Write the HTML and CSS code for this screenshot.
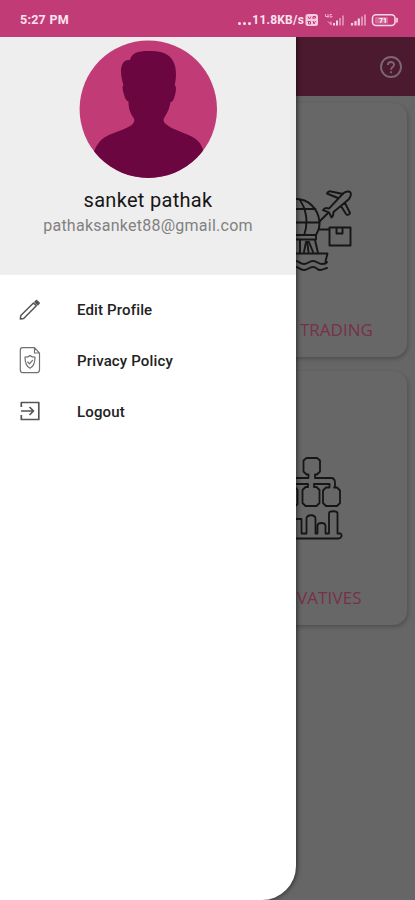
FILE: index.html
```html
<!DOCTYPE html>
<html lang="en">
<head>
<meta charset="utf-8">
<meta name="viewport" content="width=device-width, initial-scale=1">
<title>Profile menu</title>
<link rel="stylesheet" href="styles.css">
</head>
<body>
<div class="screen">
  <header class="status">
    <span class="time">5:27 PM</span>
    <div class="indicators">
      <span class="dots"><i></i><i></i><i></i></span>
      <span class="speed">11.8KB/s</span>
      <svg class="tray" width="95" height="16" viewBox="304 11 95 16">
        <rect x="305.500" y="13" width="12.500" height="12" rx="2.500" fill="#f7c9df"/>
        <path d="M308 15.500l1.500 2.500 1.500-2.500M313 18v-2.500h2.500V17H313M307.500 20.500h3v2.500h-2v-2M313 20l1 3 1.500-3" fill="none" stroke="#c13c77"/>
        <path d="M325.500 13v2.500h3M328 13v4M330 13.500h2M330 13.500v2.500h2V15" fill="none" stroke="#f3b9d3" stroke-width=".9"/>
        <path d="M328 20.500l3 3M331 20.500V24" stroke="#f3b9d3" fill="none"/>
        <path d="M334 22v2.500M337 19.500v5" stroke="#f7d0e2" stroke-width="2"/>
        <path d="M340 17v7.500M343 14.500v10" stroke="#dc86ae" stroke-width="2"/>
        <path d="M352 22v2.500M355.500 20v4.500M358.800 17.500v7" stroke="#f7d0e2" stroke-width="2.200"/>
        <path d="M362 15.500v9M365 13.500v11" stroke="#e090b5" stroke-width="2"/>
        <rect x="372.500" y="13.800" width="22.500" height="10.700" rx="3.500" fill="none" stroke="#f9d5e5" stroke-width="1.600"/>
        <path d="M397 17.500v3.500" stroke="#f9d5e5" stroke-width="1.600" stroke-linecap="round"/>
        <rect x="375" y="16" width="13" height="6.500" rx="1" fill="#d56d9b"/>
        <text x="379" y="22.300" class="battery">71</text>
      </svg>
    </div>
  </header>

  <div class="stage">
    <div class="appbar">
      <svg width="24" height="24" viewBox="0 0 24 24" fill="none" stroke="#7d6670" stroke-width="1.900">
        <circle cx="12" cy="12" r="10"/>
        <path d="M8.900 10c0-4 6.200-4 6.200-.2 0 2.300-3.100 2.300-3.100 5"/>
        <path d="M12 16.200v2"/>
      </svg>
    </div>
    <main class="cards">
      <section class="card">
        <svg class="art" width="60" height="84" viewBox="296 188 60 84" fill="none" stroke="#161616" stroke-width="1.900" stroke-linejoin="round" stroke-linecap="round">
          <path d="M296 199c12 0 22 9 23.500 22.500C320 227 318.500 231 316 235M296 209h19.500M296 222.500h23M299 199c8 10 9 24 5.500 35"/>
          <path d="M319 222l9-9M319 229.500h10"/>
          <path d="M343 193.500c3-2.500 6.500-2.500 7.500-1s0 5-2 7L333.500 212c0 2.500-.500 4.500-2 5.500l-2.500-5.200-6-2.200c1-1.800 3.500-2.500 6-1.500zM338 198l-11-4.500c1-2 2.500-2.500 4-2l12 2.500M345 203l5 10c-1 2-3 2.500-4 1l-5-8"/>
          <path d="M329.500 227.500h21v18h-21zM336.500 228v5.500h6V228"/>
          <path d="M296 235h20v4.500h-20M300 240v13M315 240l3 13M304 252l2-10h3l4 10M307.500 244l1 8"/>
          <path d="M296 253.500h31.500l-2 8M296 261c3 0 4 3 8 3s5-3 9-3 5 3 9 3 5-2 5-2M296 267c3 0 4 3 8 3s5-3 9-3 4 3 7 3c4 0 5-2 7-2"/>
        </svg>
        <span class="label trading">TRADING</span>
      </section>
      <section class="card">
        <svg class="art" width="60" height="84" viewBox="296 456 60 84" fill="none" stroke="#161616" stroke-width="1.800" stroke-linejoin="round" stroke-linecap="round">
          <path d="M308.500 477v-2.500h-2l-3-3V460.500l3-2.500h10.500l3 2.500v11l-3 3h-2v2.500M296 478h12.500M315 478h16c3 0 4 2 4 5v3.500M334 487.500h3l3 3v12.500l-3 3h-11l-3-3v-12.500l3-3h3.500V484H314v3h2.500l3 3v13l-3 3h-11l-3-3v-13l3-3h2.500v-3h-12M296 488l1.500 2v14l-1.500 1.500"/>
          <path d="M296 519h5.500v14.500h5V519c0-5 9-5 9 0v14.500h2V526c0-4 8-4 8 0v7.500h3.500v-20c0-3 8.500-3 8.500 0v20h3c2 1.500 1 5-2 5H296"/>
        </svg>
        <span class="label derivatives">VATIVES</span>
      </section>
    </main>

    <aside class="drawer">
      <div class="profile">
        <svg class="avatar" width="138" height="138" viewBox="79 40 138 138">
          <defs><clipPath id="disc"><circle cx="148.300" cy="109.200" r="68.700"/></clipPath></defs>
          <g clip-path="url(#disc)">
            <rect x="79" y="40" width="138" height="138" fill="#c13c77"/>
            <path fill="#6b0640" d="M130 60c-7-1-9 6-9 11 0 6 1.500 11 2.500 14.500-1.500 0-1 4 .2 8 1 4 2.300 7.500 4.800 8 0 7 1.500 11.500 5.500 17 1 3-.5 5-3 7-9 6-26 8-32 17-3 3.500-4.500 8-6.500 12v26h113v-26c-3-5-4-10-7-13-7-8-24-10-32-17-3-2-4-5-1.500-8 3-4.500 4.500-9 5.500-14.500 3 0 4-5 5-9 .6-4 .8-7-.8-7.500 1.500-7 2-16-.5-22-3-8-9-12-23-12.500-12-.4-19 1-21.200 9z"/>
          </g>
        </svg>
        <div class="name">sanket pathak</div>
        <div class="email">pathaksanket88@gmail.com</div>
      </div>
      <nav class="menu">
        <a class="item">
          <svg width="24" height="28" viewBox="18 296 24 28" fill="none" stroke="#555" stroke-width="1.500" stroke-linejoin="round">
            <path d="M20.800 315.500l12.700-12.500 2.800 2.800L23.700 318.500l-3.400.5z"/><path d="M35 302l1.500-1.500 2.700 2.600-1.500 1.500z" fill="#555"/>
          </svg>
          <span>Edit Profile</span>
        </a>
        <a class="item">
          <svg width="24" height="28" viewBox="18 347 24 28" fill="none" stroke="#707070" stroke-width="1.200" stroke-linejoin="round" stroke-linecap="round">
            <path d="M22.500 347.600h12l5 5.500v17c0 1.500-1 2.500-2.500 2.500H22.500c-1.500 0-2.200-1-2.200-2.500v-20c0-1.500.8-2.500 2.200-2.500zM34.500 348v5h5M30 355.500c1.500 1.500 3 1.700 5 1.700 0 5.500-1 9-5 11-4-2-5-5.500-5-11 2 0 3.500-.2 5-1.700z"/><path d="M27.800 362l1.700 1.800 3-3.500"/>
          </svg>
          <span>Privacy Policy</span>
        </a>
        <a class="item">
          <svg width="24" height="28" viewBox="18 398 24 28" fill="none" stroke="#555" stroke-width="1.700" stroke-linejoin="round">
            <path d="M21.300 407v-4.500h17.500v17H21.300V415M21 411h12M29.500 407l4 4-4 4"/>
          </svg>
          <span>Logout</span>
        </a>
      </nav>
    </aside>
  </div>
</div>
</body>
</html>
```
FILE: styles.css
```css
* { box-sizing: border-box; }
body { margin: 0; font-family: Roboto, "Liberation Sans", sans-serif; }
.screen { width: 415px; height: 900px; display: flex; flex-direction: column; overflow: hidden; background: #666; }
.status { height: 37px; flex: none; background: #c13c77; color: #fbe3ee; display: flex; justify-content: space-between; align-items: center; padding: 2px 16px 0 20px; }
.time { font-size: 12.500px; font-weight: 700; letter-spacing: .25px; }
.indicators { display: flex; align-items: center; }
.dots { display: flex; gap: 2px; padding: 7px 1px 0 0; }
.dots i { width: 3px; height: 3px; border-radius: 50%; background: #fbe3ee; }
.speed { font-size: 12px; font-weight: 700; letter-spacing: .2px; }
.battery { font: 700 7px Roboto, sans-serif; fill: #fff; }
.stage { flex: 1; position: relative; display: flex; flex-direction: column; overflow: hidden; }
.appbar { height: 59px; flex: none; background: #4b1a2e; display: flex; align-items: center; justify-content: flex-end; padding-right: 12px; }
.cards { display: grid; grid-template-rows: 254px 254px; gap: 14px; padding: 7px 8px 0 215px; }
.card { border-radius: 14px; background: #676767; box-shadow: 1px 2px 4px rgba(0, 0, 0, .24); display: flex; flex-direction: column; align-items: flex-start; padding: 85px 0 0 81px; }
.label { font: 17px/24px "Open Sans", sans-serif; color: #78304a; margin-top: 46px; white-space: nowrap; }
.trading { margin-left: 4px; }
.derivatives { margin-left: 1px; letter-spacing: .1px; }
.drawer { position: absolute; top: 0; left: 0; bottom: 0; width: 296px; background: #fff; border-radius: 0 0 34px 0; overflow: hidden; box-shadow: 1px 0 5px rgba(0, 0, 0, .6); }
.profile { height: 238px; background: #eee; display: flex; flex-direction: column; align-items: center; padding-top: 3px; }
.avatar { display: block; flex: none; }
.name { font-size: 20px; line-height: 24px; margin-top: 10px; color: #161616; letter-spacing: .3px; }
.email { font-size: 16px; line-height: 20px; margin-top: 4px; color: #818181; letter-spacing: .25px; }
.menu { padding-top: 10px; }
.item { height: 50.800px; display: flex; align-items: center; gap: 35px; padding-left: 18px; font-size: 15px; font-weight: 500; color: #222; letter-spacing: .15px; }
```
